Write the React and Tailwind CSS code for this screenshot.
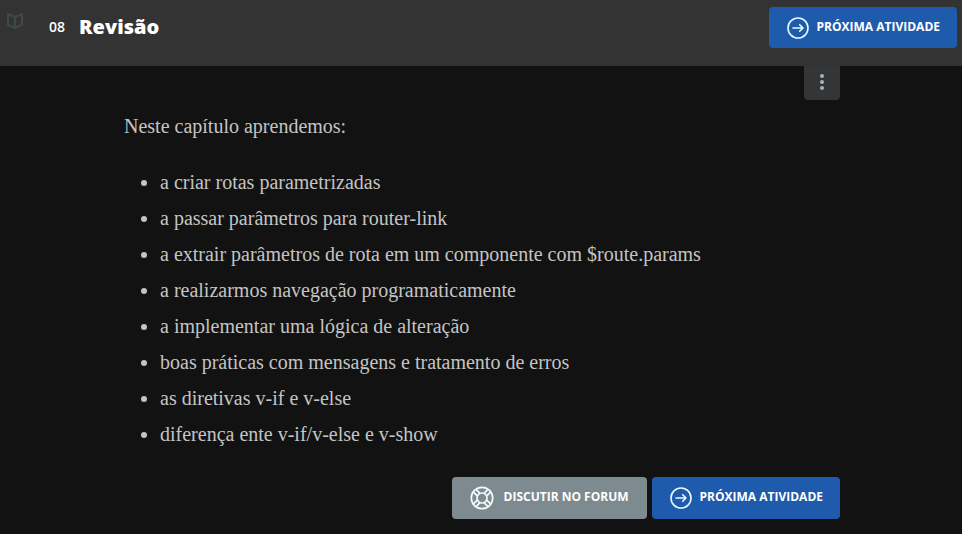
const topics = [
  'a criar rotas parametrizadas',
  'a passar parâmetros para router-link',
  'a extrair parâmetros de rota em um componente com $route.params',
  'a realizarmos navegação programaticamente',
  'a implementar uma lógica de alteração',
  'boas práticas com mensagens e tratamento de erros',
  'as diretivas v-if e v-else',
  'diferença ente v-if/v-else e v-show',
];

function BookIcon() {
  return (
    <svg width="18" height="18" viewBox="0 0 18 18" fill="none" stroke="currentColor" strokeWidth="2" aria-hidden="true">
      <path d="M9 5 2 2v10.800L9 16l7-3.200V2L9 5v11" strokeLinejoin="round" />
    </svg>
  );
}

function ArrowCircleIcon() {
  return (
    <svg width="22" height="22" viewBox="0 0 22 22" fill="none" stroke="#e6fbff" strokeWidth="1.6" strokeLinecap="round" strokeLinejoin="round" aria-hidden="true">
      <circle cx="11" cy="11" r="10" />
      <path d="M6 11h10M12.700 7.700 16 11l-3.300 3.300" />
    </svg>
  );
}

function LifebuoyIcon() {
  return (
    <svg width="24" height="24" viewBox="0 0 24 24" fill="none" stroke="#f4fafa" strokeWidth="1.700" aria-hidden="true">
      <circle cx="12" cy="12" r="10.700" />
      <circle cx="12" cy="12" r="5" />
      <path d="m7.200 9.800-4-4M9.800 7.200l-4-4M14.200 7.200l4-4M16.800 9.800l4-4M16.800 14.200l4 4M14.200 16.800l4 4M9.800 16.800l-4 4M7.200 14.200l-4 4" />
    </svg>
  );
}

function NextLink({ className }) {
  return (
    <a href="#proxima" className={`flex items-center gap-2 rounded bg-[#1f5bad] pr-[17px] pl-[18px] text-xs font-bold text-white ${className}`}>
      <ArrowCircleIcon />
      <span className="pb-0.5 whitespace-nowrap">PRÓXIMA ATIVIDADE</span>
    </a>
  );
}

export default function App() {
  return (
    <div className="min-h-screen bg-[#121212] font-['Open_Sans',sans-serif]">
      <header className="flex h-[66px] items-start bg-[#333333] pr-[5px] pl-1.5">
        <button type="button" aria-label="Abrir índice" className="mt-3 text-[#41484c]">
          <BookIcon />
        </button>
        <h1 className="mt-[13px] ml-[25px] flex items-center gap-3.5 text-white">
          <span className="text-sm font-semibold">08</span>
          <span className="text-xl font-extrabold">Revisão</span>
        </h1>
        <NextLink className="mt-[7px] ml-auto h-[41px]" />
      </header>

      <main className="relative mx-auto w-full max-w-[718px] pl-0.5">
        <button
          type="button"
          aria-label="Mais opções"
          className="absolute top-0 right-0 flex h-[34px] w-9 items-center justify-center rounded-b bg-[#333536] pb-0.5 text-[#a9b2b6]"
        >
          <svg width="4" height="18" viewBox="0 0 4 18" fill="currentColor" aria-hidden="true">
            <circle cx="2" cy="3" r="2" />
            <circle cx="2" cy="9" r="2" />
            <circle cx="2" cy="15" r="2" />
          </svg>
        </button>

        <section className="pt-[42px] font-['Source_Serif_Pro','Liberation_Serif',serif] text-xl leading-9 text-[#c4c4c4]">
          <p>Neste capítulo aprendemos:</p>
          <ul className="mt-5 list-disc pl-9">
            {topics.map((topic) => (
              <li key={topic}>{topic}</li>
            ))}
          </ul>
        </section>

        <div className="mt-[25px] flex justify-end gap-[5px] pb-[15px]">
          <a href="#forum" className="flex h-[42px] items-center gap-2.5 rounded bg-[#7d8a8f] px-[18px] text-xs font-bold text-white">
            <LifebuoyIcon />
            <span className="pb-0.5 whitespace-nowrap">DISCUTIR NO FORUM</span>
          </a>
          <NextLink className="h-[42px]" />
        </div>
      </main>
    </div>
  );
}
